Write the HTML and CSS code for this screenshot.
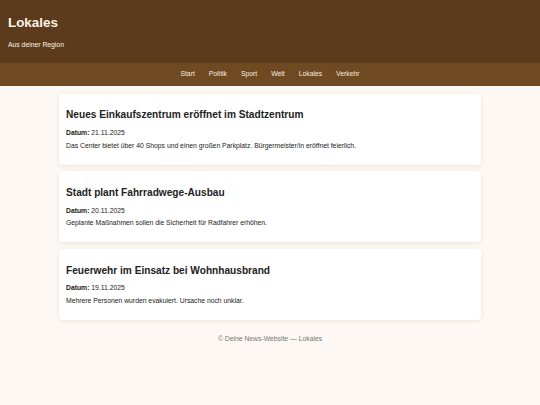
FILE: index.html
```html
<!DOCTYPE html>
<html lang="de">
<head>
<meta charset="utf-8">
<title>Lokales</title>
<link rel="stylesheet" href="styles.css">
</head>
<body>
<header class="site-header">
  <h1 class="site-title">Lokales</h1>
  <p class="site-tagline">Aus deiner Region</p>
</header>
<nav class="site-nav">
  <a href="#">Start</a>
  <a href="#">Politik</a>
  <a href="#">Sport</a>
  <a href="#">Welt</a>
  <a href="#">Lokales</a>
  <a href="#">Verkehr</a>
</nav>
<main class="content">
  <article class="card">
    <h2 class="card-title">Neues Einkaufszentrum eröffnet im Stadtzentrum</h2>
    <p class="card-date"><strong>Datum:</strong> 21.11.2025</p>
    <p class="card-text">Das Center bietet über 40 Shops und einen großen Parkplatz. Bürgermeister/in eröffnet feierlich.</p>
  </article>
  <article class="card">
    <h2 class="card-title">Stadt plant Fahrradwege-Ausbau</h2>
    <p class="card-date"><strong>Datum:</strong> 20.11.2025</p>
    <p class="card-text">Geplante Maßnahmen sollen die Sicherheit für Radfahrer erhöhen.</p>
  </article>
  <article class="card">
    <h2 class="card-title">Feuerwehr im Einsatz bei Wohnhausbrand</h2>
    <p class="card-date"><strong>Datum:</strong> 19.11.2025</p>
    <p class="card-text">Mehrere Personen wurden evakuiert. Ursache noch unklar.</p>
  </article>
</main>
<footer class="site-footer">© Deine News-Website — Lokales</footer>
</body>
</html>
```

FILE: styles.css
```css
html, body {
  margin: 0;
  padding: 0;
}
body {
  background: #fdf8f3;
  font-family: "Liberation Sans", Arial, sans-serif;
  font-size: 6.8px;
  line-height: 8px;
  color: #222;
}
.site-header {
  background: #5b3b1c;
  color: #fdf3e6;
  padding: 15px 8px 14px;
}
.site-title {
  margin: 0;
  font-size: 13.4px;
  line-height: 16px;
  font-weight: bold;
}
.site-tagline {
  margin: 9.6px 0 0;
  font-size: 6.8px;
  line-height: 8px;
}
.site-nav {
  background: #6f4922;
  display: flex;
  justify-content: center;
  gap: 14px;
  padding: 7.5px 0;
  line-height: 8px;
}
.site-nav a {
  color: #f7ece0;
  text-decoration: none;
  font-size: 6.8px;
}
.content {
  max-width: 422px;
  margin: 8px auto 0;
}
.card {
  background: #fff;
  border-radius: 4px;
  box-shadow: 0 1px 4px rgba(90, 60, 30, 0.10);
  padding: 7px;
  margin-bottom: 6.7px;
}
.card-title {
  font-size: 10.15px;
  line-height: 12px;
  font-weight: bold;
  margin: 8.6px 0 7.8px;
  color: #222;
}
.card-date {
  margin: 0;
}
.card-text {
  margin: 4.6px 0 8px;
}
.site-footer {
  text-align: center;
  color: #777;
  padding: 8.75px 0;
}
```
